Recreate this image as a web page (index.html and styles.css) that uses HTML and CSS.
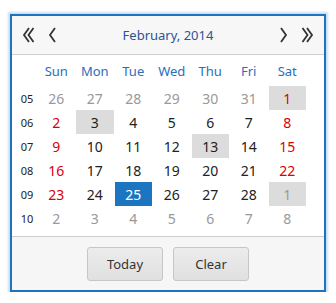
FILE: index.html
```html
<!DOCTYPE html>
<html lang="en">
<head>
    <meta charset="UTF-8">
    <title>Date picker</title>
    <link rel="stylesheet" href="styles.css">
</head>
<body>
    <div class="cal">
        <div class="head">
            <div class="nav">
                <svg class="ico dbl" viewBox="0 0 12 16"><path d="M6.5 1 L1.5 8 L6.5 15 M11 1 L6 8 L11 15"/></svg>
                <svg class="ico one" viewBox="0 0 9 16"><path d="M7.5 1 L2.5 8 L7.5 15"/></svg>
            </div>
            <div class="title">February, 2014</div>
            <div class="nav">
                <svg class="ico one" viewBox="0 0 9 16"><path d="M1.5 1 L6.5 8 L1.5 15"/></svg>
                <svg class="ico dbl" viewBox="0 0 12 16"><path d="M1 1 L6 8 L1 15 M5.5 1 L10.5 8 L5.5 15"/></svg>
            </div>
        </div>
        <div class="body">
            <div class="grid names">
                <span></span><span>Sun</span><span>Mon</span><span>Tue</span><span>Wed</span><span>Thu</span><span>Fri</span><span>Sat</span>
            </div>
            <div class="grid days">
                <span class="wk">05</span><span class="old">26</span><span class="old">27</span><span class="old">28</span><span class="old">29</span><span class="old">30</span><span class="old">31</span><span class="we hl">1</span>
                <span class="wk">06</span><span class="we">2</span><span class="hl">3</span><span>4</span><span>5</span><span>6</span><span>7</span><span class="we">8</span>
                <span class="wk">07</span><span class="we">9</span><span>10</span><span>11</span><span>12</span><span class="hl">13</span><span>14</span><span class="we">15</span>
                <span class="wk">08</span><span class="we">16</span><span>17</span><span>18</span><span>19</span><span>20</span><span>21</span><span class="we">22</span>
                <span class="wk">09</span><span class="we">23</span><span>24</span><span class="sel">25</span><span>26</span><span>27</span><span>28</span><span class="old hl">1</span>
                <span class="wk">10</span><span class="old">2</span><span class="old">3</span><span class="old">4</span><span class="old">5</span><span class="old">6</span><span class="old">7</span><span class="old">8</span>
            </div>
        </div>
        <div class="foot">
            <button type="button">Today</button>
            <button type="button">Clear</button>
        </div>
    </div>
</body>
</html>
```
FILE: styles.css
```css
body { margin: 0; font-family: "Noto Sans", "Open Sans", sans-serif; background: #fff; }
.cal { margin: 14px 0 0 10px; width: 312px; border: 2px solid #1f72bd; box-shadow: 0 0 2px 2px #c9def3; }
.head { height: 38px; background: #f7f7f7; border-bottom: 1px solid #cfcfcf; display: flex; align-items: center; justify-content: space-between; padding: 0 10px 0 10px; }
.title { color: #2c5497; font-size: 13px; }
.nav { display: flex; align-items: center; gap: 12px; }
.ico { height: 16px; fill: none; stroke: #333; stroke-width: 1.8; }
.ico.dbl { width: 13px; }
.ico.one { width: 10px; }
.body { background: #fff; padding: 4px 0 6px 5px; border-bottom: 1px solid #cfcfcf; }
.grid { display: grid; grid-template-columns: 20px repeat(7, 38.5px); }
.grid span { height: 24px; display: flex; align-items: center; justify-content: center; }
.names { margin-bottom: 3px; color: #2a6ebb; font-size: 13px; }
.days { font-size: 14px; color: #222; }
.days span { margin: 0 0.5px; }
.days .wk { font-size: 11px; color: #222; }
.days .old { color: #999; }
.days .we { color: #d9000d; }
.days .hl { background: #dcdcdc; }
.days .sel { background: #1b75c0; color: #fff; }
.foot { background: #f6f6f6; height: 53px; display: flex; justify-content: center; gap: 10px; padding-top: 10px; box-sizing: border-box; }
button { width: 76px; height: 34px; font-family: inherit; font-size: 13px; color: #333; background: linear-gradient(#ececec, #e0e0e0); border: 1px solid #c6c6c6; border-radius: 3px; }
```
